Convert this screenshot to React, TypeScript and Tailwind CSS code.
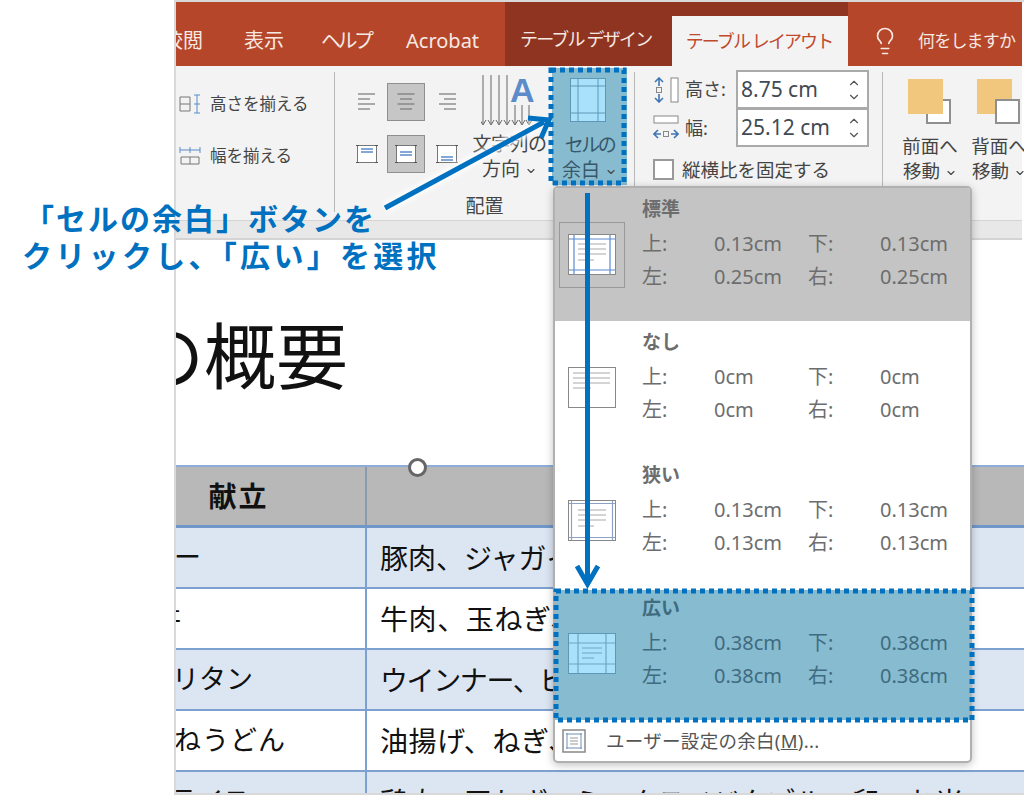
import { ChevronDown, ChevronUp, Lightbulb } from "lucide-react"

const font = { fontFamily: '"Noto Sans", "Noto Sans CJK JP", sans-serif' }

function Caret() {
  return <ChevronDown className="ml-[5px] inline-block h-[12px] w-[12px] text-[#444]" strokeWidth={2.2} />
}

function HAlign({ x = 0 }: { x?: number }) {
  const lines = [
    [3, 17],
    [8, 12],
    [13, 17],
    [18, 12],
  ]
  return (
    <svg width="20" height="22" viewBox="0 0 20 22" stroke="#777" strokeWidth="1.2">
      {lines.map(([y, w]) => {
        const start = x === 0 ? 1 : x === 1 ? (20 - w) / 2 : 19 - w
        return <line key={y} x1={start} x2={start + w} y1={y} y2={y} />
      })}
    </svg>
  )
}

function VAlign({ y }: { y: number }) {
  return (
    <svg width="24" height="24" viewBox="0 0 24 24">
      <rect x="2.5" y="3.5" width="19" height="17" fill="#fff" stroke="#777" />
      <path d="M1 3.5h3M20 3.5h3M1 20.5h3M20 20.5h3" stroke="#555" />
      <path d={`M6 ${y}h12M6 ${y + 3}h12`} stroke="#5b8bc9" strokeWidth="1.3" />
    </svg>
  )
}

function MarginIcon({ v, fill = "#fff" }: { v: "std" | "none" | "narrow" | "wide"; fill?: string }) {
  const line = v === "wide" ? "#6fa3c4" : "#aaa"
  const grid = v === "wide" ? "#6fa3c4" : v === "narrow" ? "#8ca3c6" : "#5b8bd0"
  return (
    <svg width="48" height="41" viewBox="0 0 48 41">
      <rect x="0.5" y="0.5" width="47" height="40" fill={fill} stroke={v === "wide" ? "#5f98b5" : "#888"} />
      {v === "std" && <path d="M6 1v39M42 1v39M1 5h46M1 36h46" stroke={grid} strokeWidth="1.2" fill="none" />}
      {v === "narrow" && <path d="M3.5 1v39M44.5 1v39M1 3.5h46M1 37.5h46" stroke={grid} strokeWidth="1.2" fill="none" />}
      {v === "wide" && <path d="M10 1v39M38 1v39M1 10h46M1 31h46" stroke={grid} strokeWidth="1.2" fill="none" />}
      <path
        d={
          v === "wide"
            ? "M14 15h20M14 20h20M14 25h12"
            : v === "none"
              ? "M5 6h37M5 11h37M5 16h37M5 21h18"
              : "M10 10h28M10 15h28M10 20h28M10 26h16"
        }
        stroke={line}
        strokeWidth="1.2"
      />
    </svg>
  )
}

function ArrangeIcon({ front }: { front: boolean }) {
  return (
    <div className="relative h-[45px] w-[44px]">
      {/* 重なり順だけが違う2つの四角 */}
      <div className={`absolute left-0 top-0 h-[35px] w-[35px] bg-[#f0c77c] ${front ? "z-10" : ""}`} />
      <div className="absolute left-[18px] top-[20px] h-[25px] w-[25px] border-2 border-[#8f8f8f] bg-white" />
    </div>
  )
}

function SizeRow({ label, value, icon, first }: { label: string; value: string; icon: React.ReactNode; first?: boolean }) {
  return (
    <div className="flex items-center">
      <div className="w-[32px]">{icon}</div>
      <span className="w-[51px] whitespace-nowrap text-[18px] text-[#444]">{label}</span>
      <div className={`flex h-[39px] w-[133px] items-center justify-between border-2 border-[#aaa] bg-white pl-[3px] pr-[6px] ${first ? "" : "-mt-[1px]"}`}>
        <span className="pt-[1px] text-[21px] text-[#3f4a55]">{value}</span>
        <div className="flex flex-col text-[#555]">
          <ChevronUp className="h-[14px] w-[14px]" />
          <ChevronDown className="h-[14px] w-[14px]" />
        </div>
      </div>
    </div>
  )
}

function MarginRow({ title, icon, top, left, className, textClass }: { title: string; icon: React.ReactNode; top: string; left: string; className: string; textClass: string }) {
  return (
    <div className={`flex ${className}`}>
      <div className="flex w-[87px] shrink-0 items-center justify-center pr-[14px]">{icon}</div>
      <div className={`text-[20px] ${textClass}`}>
        <div className="h-[31px] text-[19px] font-bold leading-[26px]">{title}</div>
        <div className="grid h-[33px] grid-cols-[72px_94px_72px_80px] items-center whitespace-nowrap">
          <span>上:</span>
          <span>{top}</span>
          <span>下:</span>
          <span>{top}</span>
        </div>
        <div className="grid h-[33px] grid-cols-[72px_94px_72px_80px] items-center whitespace-nowrap">
          <span>左:</span>
          <span>{left}</span>
          <span>右:</span>
          <span>{left}</span>
        </div>
      </div>
    </div>
  )
}

const rows = [
  { name: "カレー", nameClass: "-ml-[58px] tracking-[1px]", food: "豚肉、ジャガイモ、ニンジン", foodClass: "", bg: "bg-[#dce6f3]" },
  { name: "牛丼", nameClass: "-ml-[50px] tracking-[1px]", food: "牛肉、玉ねぎ、しょうが", foodClass: "tracking-[0.6px]", bg: "bg-white" },
  { name: "ナポリタン", nameClass: "-ml-[58px]", food: "ウインナー、ピーマン、玉ねぎ", foodClass: "tracking-[-1.4px]", bg: "bg-[#dce6f3]" },
  { name: "きつねうどん", nameClass: "-ml-[58px] tracking-[1px]", food: "油揚げ、ねぎ、かまぼこ", foodClass: "tracking-[0.6px]", bg: "bg-white" },
  { name: "オムライス", nameClass: "-ml-[58px]", food: "鶏肉、玉ねぎ、ミックスベジタブル、卵、お米", foodClass: "", bg: "bg-[#dce6f3]" },
]

export default function App() {
  return (
    <div className="relative h-[795px] w-[1024px] overflow-hidden bg-white" style={font}>
      <div className="ml-[174px] flex h-[795px] flex-col overflow-hidden border-b-2 border-l-2 border-t-2 border-[#d9d9d9]">
        {/* タブ */}
        <div className="mr-[2px] flex h-[64px] shrink-0 bg-[#b5462a] text-[18px] text-[#f6e9e4]">
          <div className="flex h-full w-[329px] items-center whitespace-nowrap pt-[14px] text-[20px]">
            <span className="-ml-[13px] w-[81px]">校閲</span>
            <span className="w-[77px]">表示</span>
            <span className="w-[85px] tracking-[-3.5px]">ヘルプ</span>
            <span>Acrobat</span>
          </div>
          <div className="flex h-full w-[343px] items-end bg-[#8e3420]">
            <span className="mb-[13px] w-[167px] whitespace-nowrap pl-[15px] tracking-[-1.8px]">テーブル デザイン</span>
            <span className="flex h-[50px] w-[176px] items-center justify-center whitespace-nowrap bg-[#f3f3f3] pr-[2px] pt-[1px] tracking-[-1.9px] text-[#c0492c]">
              テーブル レイアウト
            </span>
          </div>
          <div className="flex items-center whitespace-nowrap pl-[22px] pt-[14px]">
            <Lightbulb className="mr-[18px] h-[30px] w-[30px]" strokeWidth={1.3} />
            <span className="text-[17px] tracking-[-0.8px]">何をしますか</span>
          </div>
        </div>

        {/* リボン */}
        <div className="mr-[2px] flex h-[154px] shrink-0 items-start bg-[#f3f3f3] text-[#444]">
          <div className="mt-[6px] flex h-[140px] w-[159px] shrink-0 flex-col gap-[26px] border-r border-[#b8b8b8] pl-[3px] pt-[19px] text-[16.5px]">
            <div className="flex h-[26px] items-center gap-[9px] whitespace-nowrap">
              <svg width="22" height="20" viewBox="0 0 22 20" fill="none">
                <path d="M1 3h10v14H1zM1 10h10" stroke="#777" />
                <path d="M15 1h6M15 19h6M18 1v18M15 10h6" stroke="#5b8bc9" />
              </svg>
              高さを揃える
            </div>
            <div className="flex h-[26px] items-center gap-[9px] whitespace-nowrap">
              <svg width="22" height="20" viewBox="0 0 22 20" fill="none">
                <path d="M2 11h18v7H2zM11 11v7" stroke="#777" />
                <path d="M1 1v6M21 1v6M1 4h20M11 1v6" stroke="#5b8bc9" />
              </svg>
              幅を揃える
            </div>
          </div>

          <div className="mt-[6px] flex h-[140px] w-[300px] shrink-0 flex-col border-r border-[#b8b8b8]">
            <div className="flex h-[122px] shrink-0 pl-[12px]">
              <div className="grid h-fit grid-cols-[40px_40px_40px] gap-y-[14px] pt-[11px]">
                <div className="flex h-[38px] items-center justify-center"><HAlign x={0} /></div>
                <div className="flex h-[38px] w-[38px] items-center justify-center border border-[#8f8f8f] bg-[#c6c6c6]"><HAlign x={1} /></div>
                <div className="flex h-[38px] items-center justify-center"><HAlign x={2} /></div>
                <div className="flex h-[38px] items-center justify-center"><VAlign y={7} /></div>
                <div className="flex h-[38px] w-[38px] items-center justify-center border border-[#8f8f8f] bg-[#c6c6c6]"><VAlign y={10} /></div>
                <div className="flex h-[38px] items-center justify-center"><VAlign y={15} /></div>
              </div>
              <div className="ml-[3px] flex w-[79px] flex-col items-center text-[19px] leading-[25px]">
                <svg className="mt-[1px]" width="58" height="58" viewBox="0 0 58 58" fill="none">
                  <path d="M2 2v49M10 2v49M18 2v49M26 2v49M-1 47l3 5 3-5M7 47l3 5 3-5M15 47l3 5 3-5M23 47l3 5 3-5M31 47l3 5 3-5M34 32v20M41 32v20M48 32v20M38 47l3 5 3-5M45 47l3 5 3-5" stroke="#666" />
                  <text x="29" y="29" fontSize="34" fontWeight="700" fill="#5b8bc9" fontFamily='"Liberation Sans", sans-serif'>A</text>
                </svg>
                <span className="mt-[1px] whitespace-nowrap tracking-[-0.5px]">文字列の</span>
                <span className="whitespace-nowrap">方向<Caret /></span>
              </div>
              <div className="ml-[3px] -mt-[4px] flex h-[117px] w-[75px] flex-col items-center bg-[#87bbcf] pt-[10px] text-[19px] leading-[25px] text-[#37576a]">
                <svg className="mr-[4px]" width="36" height="44" viewBox="0 0 36 44" fill="none">
                  <rect x="0.5" y="0.5" width="35" height="43" fill="#a9e1fb" stroke="#5f98b5" />
                  <path d="M8 1v42M28 1v42M1 8h34M1 35h34" stroke="#5f98b5" />
                </svg>
                <span className="mt-[11px] whitespace-nowrap tracking-[-2.5px]">セルの</span>
                <span className="whitespace-nowrap">余白<Caret /></span>
              </div>
            </div>
            <div className="h-[24px] shrink-0 text-center text-[19px] leading-[24px]">配置</div>
          </div>

          <div className="mt-[6px] h-[140px] w-[248px] shrink-0 border-r border-[#b8b8b8] pl-[18px]">
            <div className="-mt-[2px] flex flex-col">
              <SizeRow
                first
                label="高さ:"
                value="8.75 cm"
                icon={
                  <svg width="26" height="26" viewBox="0 0 26 26" fill="none">
                    <rect x="18" y="1" width="7" height="24" stroke="#888" fill="#fff" />
                    <path d="M6 1v8M6 17v8M2 5l4-4 4 4M2 21l4 4 4-4" stroke="#3f77b5" strokeWidth="1.6" />
                    <rect x="3.5" y="10.5" width="5" height="5" stroke="#888" />
                  </svg>
                }
              />
              <SizeRow
                label="幅:"
                value="25.12 cm"
                icon={
                  <svg width="26" height="26" viewBox="0 0 26 26" fill="none">
                    <rect x="1" y="1" width="24" height="7" stroke="#888" fill="#fff" />
                    <path d="M1 19h7M18 19h7M5 15l-4 4 4 4M21 15l4 4-4 4" stroke="#3f77b5" strokeWidth="1.6" />
                    <rect x="10.5" y="16.5" width="5" height="5" stroke="#888" />
                  </svg>
                }
              />
            </div>
            <div className="mt-[9px] flex items-center gap-[8px] whitespace-nowrap text-[18.5px]">
              <div className="h-[21px] w-[21px] border-2 border-[#999] bg-white" />
              <span>縦横比を固定する</span>
            </div>
          </div>

          <div className="flex gap-[9px] pl-[17px] pt-[13px] text-[18.5px] leading-[25px]">
            <div className="flex w-[60px] shrink-0 flex-col items-center whitespace-nowrap">
              <ArrangeIcon front />
              <span className="mt-[9px]">前面へ</span>
              <span>移動<Caret /></span>
            </div>
            <div className="flex w-[60px] shrink-0 flex-col items-center whitespace-nowrap">
              <ArrangeIcon front={false} />
              <span className="mt-[9px]">背面へ</span>
              <span>移動<Caret /></span>
            </div>
          </div>
        </div>

        <div className="mr-[2px] h-[20px] shrink-0 border-b-2 border-t border-[#d4d4d4] bg-[#e8e8e8]" />

        {/* スライド */}
        <div className="h-[225px] shrink-0">
          <div className="-ml-[44px] whitespace-nowrap pt-[61px] text-[72px] leading-[108px] text-[#111]">の概要</div>
        </div>

        <div className="relative w-[850px] shrink-0 border-t-2 border-[#8dadd6] text-[27px] text-[#111]">
          <div className="flex h-[61px] border-b-[3px] border-[#6f97c9] bg-[#b8b8b8] font-bold">
            <div className="flex w-[191px] shrink-0 items-center justify-center border-r-2 border-[#8a9bb0] pr-[64px] text-[28px] tracking-[2px]">献立</div>
            <div className="flex-1" />
          </div>
          {rows.map((row) => (
            <div key={row.name} className={`flex h-[61px] border-b-2 border-[#7ca0cf] ${row.bg}`}>
              <div className="flex w-[191px] shrink-0 items-center overflow-hidden whitespace-nowrap border-r-2 border-[#7ca0cf]">
                <span className={row.nameClass}>{row.name}</span>
              </div>
              <div className={`flex items-center whitespace-nowrap pl-[13px] text-[28px] ${row.foodClass}`}>{row.food}</div>
            </div>
          ))}
        </div>
      </div>

      {/* 回転ハンドル */}
      <div className="absolute left-[408px] top-[458px] h-[19px] w-[19px] rounded-full border-[3px] border-[#666] bg-white" />

      {/* 余白メニュー */}
      <div className="absolute left-[553px] top-[186px] w-[419px] overflow-hidden rounded-[5px] border-2 border-[#b0b0b0] bg-white shadow-[0_2px_8px_rgba(0,0,0,0.25)]">
        <MarginRow
          className="h-[133px] bg-[#c4c4c4]"
          textClass="pt-[8px] text-[#6d6d6d]"
          title="標準"
          top="0.13cm"
          left="0.25cm"
          icon={
            <div className="flex h-[66px] w-[66px] items-center justify-center border border-[#999]">
              <MarginIcon v="std" />
            </div>
          }
        />
        <MarginRow className="h-[133px]" textClass="pt-[8px] text-[#6d6d6d]" title="なし" top="0cm" left="0cm" icon={<MarginIcon v="none" />} />
        <MarginRow className="h-[133px]" textClass="pt-[8px] text-[#6d6d6d]" title="狭い" top="0.13cm" left="0.13cm" icon={<MarginIcon v="narrow" />} />
        <MarginRow className="mt-[3px] h-[130px] bg-[#87bbcf]" textClass="pt-[5px] text-[#3f6b80]" title="広い" top="0.38cm" left="0.38cm" icon={<div className="pb-[4px]"><MarginIcon v="wide" fill="#a9e1fb" /></div>} />
        <div className="flex h-[41px] items-center text-[18.5px] text-[#555]">
          <svg className="ml-[7px] mr-[20px]" width="24" height="24" viewBox="0 0 24 24" fill="none">
            <rect x="1" y="1" width="22" height="22" stroke="#888" strokeWidth="1.5" fill="#fff" />
            <path d="M5 4v16M19 4v16M4 5h16M4 19h16" stroke="#6f8fb8" />
            <path d="M8 9h8M8 12h8M8 15h8" stroke="#999" />
          </svg>
          <span className="whitespace-nowrap tracking-[0.3px]">ユーザー設定の余白(<span className="underline">M</span>)...</span>
        </div>
      </div>

      {/* 注釈 */}
      <div className="absolute left-[18px] top-[200px] whitespace-nowrap text-[30px] font-bold leading-[37px] text-[#0070c0]">
        <div className="pl-[6px] tracking-[2px]">「セルの余白」ボタンを</div>
        <div className="pl-[4px] tracking-[3.3px]">クリックし、「広い」を選択</div>
      </div>

      <svg className="pointer-events-none absolute left-0 top-0" width="1024" height="795" viewBox="0 0 1024 795" fill="none">
        <defs>
          <filter id="glow" x="-20%" y="-20%" width="140%" height="140%">
            <feGaussianBlur stdDeviation="2" />
          </filter>
        </defs>
        <rect x="551" y="70" width="73" height="113" stroke="#0070c0" strokeWidth="5" strokeDasharray="5 4" />
        <rect x="556" y="591" width="416" height="129" stroke="#0070c0" strokeWidth="5" strokeDasharray="5 4" />
        <path d="M385 208L540 124" stroke="#fff" strokeWidth="11" opacity="0.8" filter="url(#glow)" />
        <path d="M587.5 193V584" stroke="#fff" strokeWidth="13" opacity="0.8" filter="url(#glow)" />
        <path d="M385 208L544 122M528 118L549 120L541 138" stroke="#0070c0" strokeWidth="5" />
        <path d="M587.5 193V582M577 566L587.5 584L598 566" stroke="#0070c0" strokeWidth="5" />
      </svg>
    </div>
  )
}
